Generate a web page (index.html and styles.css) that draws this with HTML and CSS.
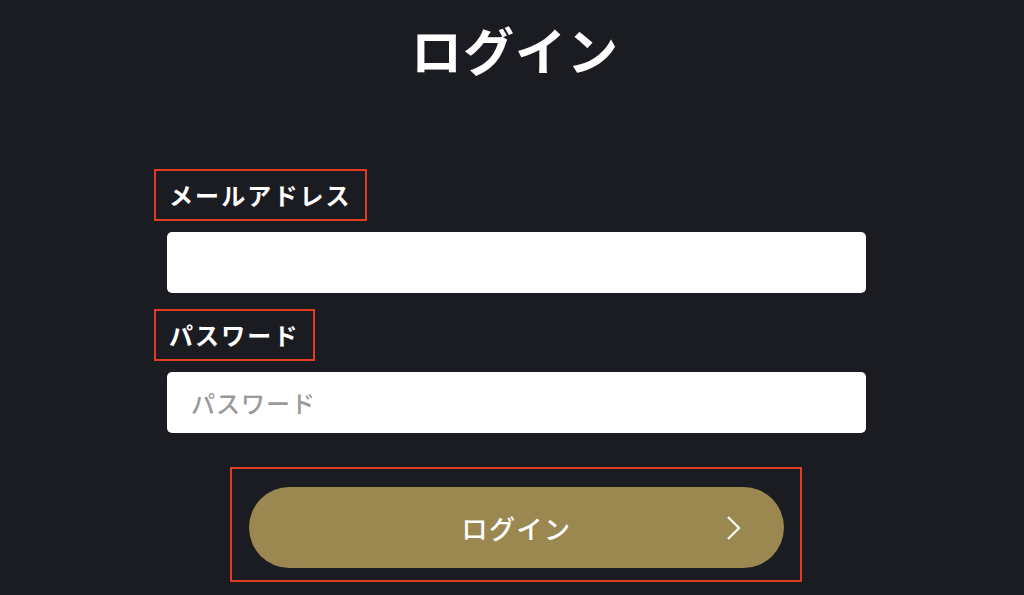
FILE: index.html
```html
<!DOCTYPE html>
<html lang="ja">
<head>
  <meta charset="UTF-8" />
  <meta name="viewport" content="width=device-width, initial-scale=1.0"/>
  <title>ログイン</title>
  <link rel="stylesheet" href="styles.css">
</head>
<body>
  <h1 class="title">ログイン</h1>
  <form class="login-form" onsubmit="return false">
    <label class="field-label" for="email">メールアドレス</label>
    <input class="field-input" id="email" type="email">
    <label class="field-label" for="password">パスワード</label>
    <input class="field-input" id="password" type="password" placeholder="パスワード">
    <div class="submit-box">
      <button class="submit-btn" type="submit">
        ログイン
        <svg class="chevron" width="16" height="26" viewBox="0 0 16 26"><polyline points="2,2 13,13 2,24" fill="none" stroke="#fff" stroke-width="2.2"/></svg>
      </button>
    </div>
  </form>
</body>
</html>
```

FILE: styles.css
```css
body { margin: 0; background: #1b1c21; color: #fff; font-family: "Noto Sans CJK JP", "Noto Sans", sans-serif; }
.title { margin: 0; padding-top: 18px; height: 169px; box-sizing: border-box; text-align: center; font-size: 51px; line-height: 62px; font-weight: 700; letter-spacing: 1px; padding-left: 6px; }
.login-form { width: 699px; margin-left: 167px; display: flex; flex-direction: column; align-items: flex-start; }
.field-label { margin-left: -13px; border: 2px solid #e03c22; padding: 6px 13px; font-size: 24px; line-height: 36px; font-weight: 700; letter-spacing: 2.1px; }
.field-input { width: 100%; height: 61px; box-sizing: border-box; margin: 11px 0 16px; border: none; border-radius: 5px; background: #fff; padding: 0 24px; font-family: inherit; font-size: 24px; font-weight: 500; letter-spacing: 1px; }
.field-input::placeholder { color: #9a9a9a; }
.login-form .field-input:last-of-type { margin-bottom: 0; }
.submit-box { margin: 34px 0 0 63px; border: 2px solid #e03c22; padding: 18px 16px 12px 17px; }
.submit-btn { position: relative; width: 535px; height: 81px; border: none; border-radius: 41px; background: #9a8850; color: #fff; font-family: inherit; font-size: 26px; font-weight: 500; letter-spacing: 1.5px; cursor: pointer; }
.chevron { position: absolute; right: 42px; top: 28px; }
```
